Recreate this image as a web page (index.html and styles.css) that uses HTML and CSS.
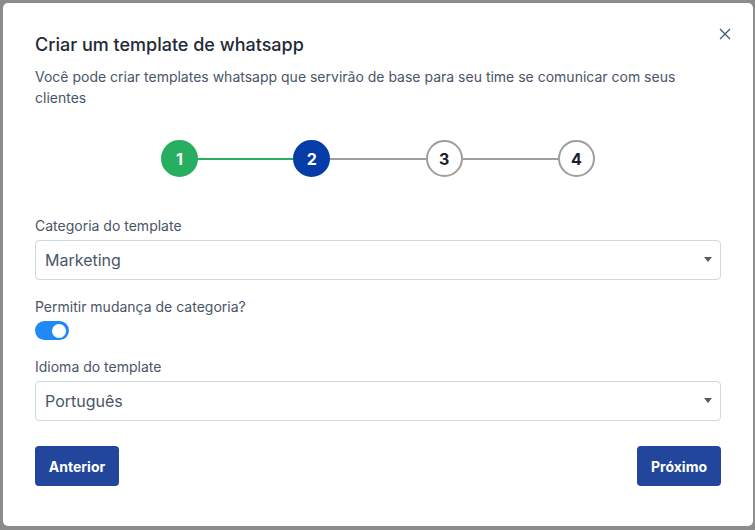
FILE: index.html
```html
<!DOCTYPE html>
<html lang="pt-BR">
<head>
<meta charset="UTF-8">
<meta name="viewport" content="width=device-width, initial-scale=1.0">
<title>Criar um template de whatsapp</title>
<link rel="stylesheet" href="styles.css">
</head>
<body>

<div class="backdrop">
    <div class="modal">
        <button class="close-button" aria-label="Fechar">
            <svg width="12" height="12" viewBox="0 0 12 12"><path d="M1 1 L11 11 M11 1 L1 11" stroke="#3e5878" stroke-width="1.3" fill="none"/></svg>
        </button>

        <h2 class="modal-title">Criar um template de whatsapp</h2>
        <p class="modal-text">Você pode criar templates whatsapp que servirão de base para seu time se comunicar com seus clientes</p>

        <div class="stepper">
            <div class="step step-done">1</div>
            <div class="step-line line-done"></div>
            <div class="step step-current">2</div>
            <div class="step-line"></div>
            <div class="step">3</div>
            <div class="step-line"></div>
            <div class="step">4</div>
        </div>

        <div class="field">
            <label for="categoria">Categoria do template</label>
            <div class="select-wrap">
                <select id="categoria">
                    <option>Marketing</option>
                    <option>Utilidade</option>
                </select>
            </div>
        </div>

        <div class="field">
            <label>Permitir mudança de categoria?</label>
            <div class="toggle"><span class="knob"></span></div>
        </div>

        <div class="field">
            <label for="idioma">Idioma do template</label>
            <div class="select-wrap">
                <select id="idioma">
                    <option>Português</option>
                    <option>English</option>
                </select>
            </div>
        </div>

        <div class="modal-footer">
            <button class="nav-button">Anterior</button>
            <button class="nav-button">Próximo</button>
        </div>
    </div>
</div>

</body>
</html>
```

FILE: styles.css
```css
body {
    margin: 0;
    font-family: Inter, "Noto Sans", sans-serif;
    background-color: #8c8c8c;
}
.backdrop {
    width: 755px;
    height: 530px;
    padding: 3px 2px 4px 3px;
    box-sizing: border-box;
    background-color: #8c8c8c;
}
.modal {
    position: relative;
    width: 750px;
    height: 523px;
    box-sizing: border-box;
    padding: 28px 32px 40px 32px;
    background-color: #fff;
    border-radius: 5px;
}
.close-button {
    position: absolute;
    top: 25px;
    right: 22px;
    padding: 0;
    border: none;
    background: none;
    cursor: pointer;
    line-height: 0;
}
.modal-title {
    margin: 0;
    font-size: 18px;
    line-height: 27px;
    font-weight: 500;
    color: #1f2937;
}
.modal-text {
    margin: 8px 0 0 0;
    font-size: 14px;
    line-height: 21px;
    color: #4a5568;
}
.stepper {
    display: flex;
    align-items: center;
    width: 434px;
    margin: 32px auto 38px auto;
}
.step {
    width: 37px;
    height: 37px;
    box-sizing: border-box;
    border: 2px solid #9e9e9e;
    border-radius: 50%;
    display: flex;
    align-items: center;
    justify-content: center;
    font-size: 16px;
    font-weight: 700;
    color: #1a202c;
    background-color: #fff;
    flex-shrink: 0;
}
.step-done {
    background-color: #27ae60;
    border-color: #27ae60;
    color: #fff;
}
.step-current {
    background-color: #063ca8;
    border-color: #063ca8;
    color: #fff;
}
.step-line {
    flex: 1;
    height: 2px;
    background-color: #9e9e9e;
}
.line-done {
    background-color: #27ae60;
}
.field {
    margin-bottom: 16px;
}
.field label {
    display: block;
    margin-bottom: 4px;
    font-size: 14px;
    line-height: 21px;
    color: #4a5568;
}
.select-wrap {
    position: relative;
}
.select-wrap::after {
    content: "";
    position: absolute;
    right: 9px;
    top: 17px;
    border-left: 4px solid transparent;
    border-right: 4px solid transparent;
    border-top: 5px solid #5a5a5a;
}
.select-wrap select {
    width: 100%;
    height: 40px;
    padding: 0 30px 0 9px;
    border: 1px solid #cfd9e4;
    border-radius: 4px;
    background-color: #fff;
    font-family: Inter, "Noto Sans", sans-serif;
    font-size: 16px;
    color: #4a5568;
    appearance: none;
    -webkit-appearance: none;
}
.toggle {
    position: relative;
    width: 34px;
    height: 19px;
    margin-top: 0;
    margin-bottom: 1px;
    border-radius: 10px;
    background-color: #2188f7;
}
.toggle .knob {
    position: absolute;
    top: 2.5px;
    right: 3px;
    width: 14px;
    height: 14px;
    border-radius: 50%;
    background-color: #fff;
}
.modal-footer {
    display: flex;
    justify-content: space-between;
    margin-top: 25px;
}
.nav-button {
    height: 40px;
    width: 84px;
    border: none;
    border-radius: 4px;
    background-color: #22469b;
    color: #fff;
    font-family: Inter, "Noto Sans", sans-serif;
    font-size: 14px;
    font-weight: 700;
    cursor: pointer;
}
.nav-button:hover {
    background-color: #1c3c87;
}
```
